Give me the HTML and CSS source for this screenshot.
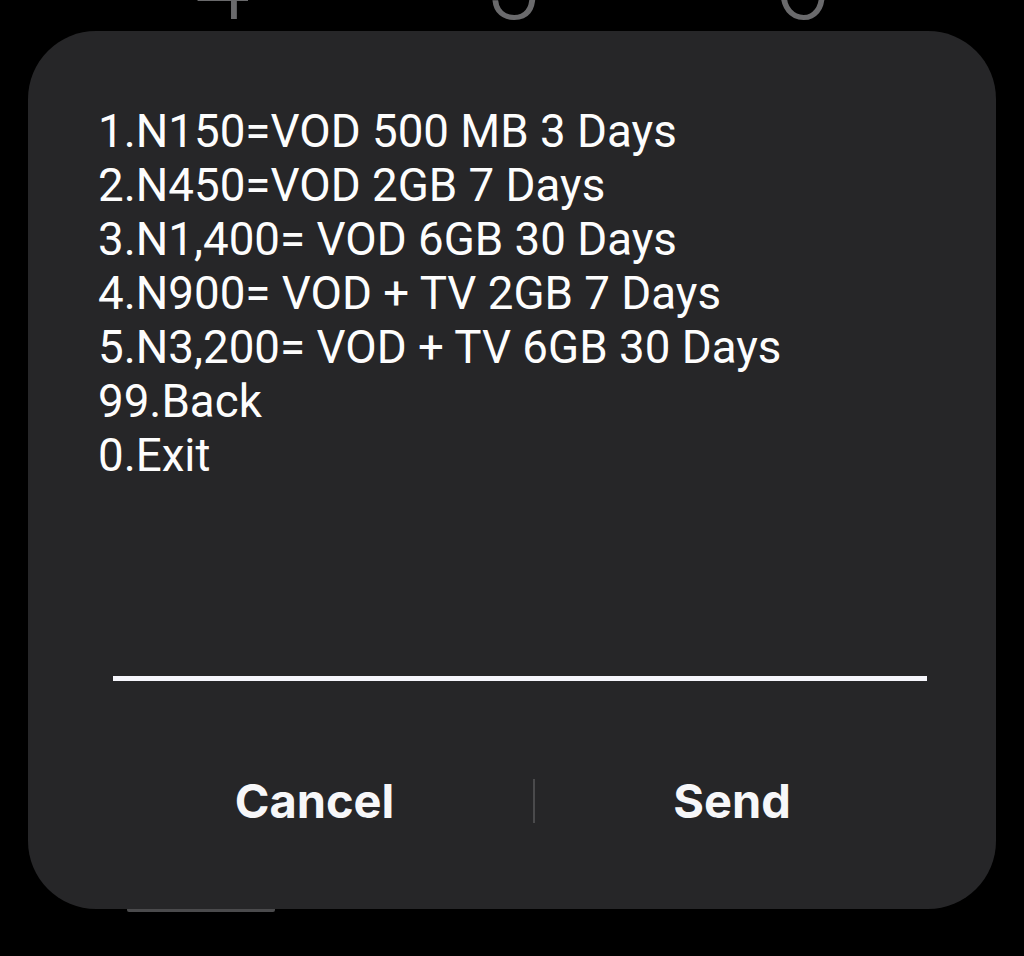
FILE: index.html
```html
<!DOCTYPE html>
<html>
<head>
<meta charset="utf-8">
<link rel="stylesheet" href="styles.css">
</head>
<body>
<div class="keypad">
  <span class="key">4</span>
  <span class="key">5</span>
  <span class="key">6</span>
</div>
<div class="dialog">
  <div class="message">
    <div>1.N150=VOD 500 MB 3 Days</div>
    <div>2.N450=VOD 2GB 7 Days</div>
    <div>3.N1,400= VOD 6GB 30 Days</div>
    <div>4.N900= VOD + TV 2GB 7 Days</div>
    <div>5.N3,200= VOD + TV 6GB 30 Days</div>
    <div>99.Back</div>
    <div>0.Exit</div>
  </div>
  <div class="input-line"></div>
  <div class="actions">
    <div class="btn">Cancel</div>
    <div class="sep"></div>
    <div class="btn">Send</div>
  </div>
</div>
<div class="under-bar"></div>
</body>
</html>
```

FILE: styles.css
```css
html, body {
  margin: 0;
  padding: 0;
  background: #000;
  width: 1024px;
  height: 956px;
  overflow: hidden;
}

.keypad {
  display: grid;
  grid-template-columns: 290px 290px 290px;
  margin-left: 77px;
  margin-top: -65px;
  height: 96px;
  font-family: "Roboto", sans-serif;
  font-weight: 300;
  font-size: 100px;
  line-height: 100px;
  color: #6a6a6c;
}

.key {
  text-align: center;
}

.dialog {
  margin-left: 28px;
  width: 968px;
  background: #262628;
  border-radius: 68px;
  padding-top: 74px;
  padding-bottom: 86px;
  box-sizing: border-box;
  height: 878px;
}

.message {
  margin-left: 70px;
  font-family: "Roboto", sans-serif;
  font-size: 45.7px;
  line-height: 54px;
  color: #fdfdfd;
}

.input-line {
  margin-top: 193px;
  margin-left: 85px;
  width: 814px;
  height: 5px;
  background: #f6f6fc;
}

.actions {
  margin-top: 98px;
  margin-left: 68px;
  display: grid;
  grid-template-columns: 437px 2px 394px;
  align-items: center;
  height: 44px;
}

.btn {
  text-align: center;
  font-family: "Inter", sans-serif;
  font-weight: 700;
  font-size: 47px;
  line-height: 44px;
  color: #f7f7f9;
}

.sep {
  width: 2px;
  height: 44px;
  background: #4a4a4c;
}

.under-bar {
  margin-left: 127px;
  width: 148px;
  height: 3px;
  background: #4a4a4c;
  border-radius: 0 0 2px 2px;
}
```
